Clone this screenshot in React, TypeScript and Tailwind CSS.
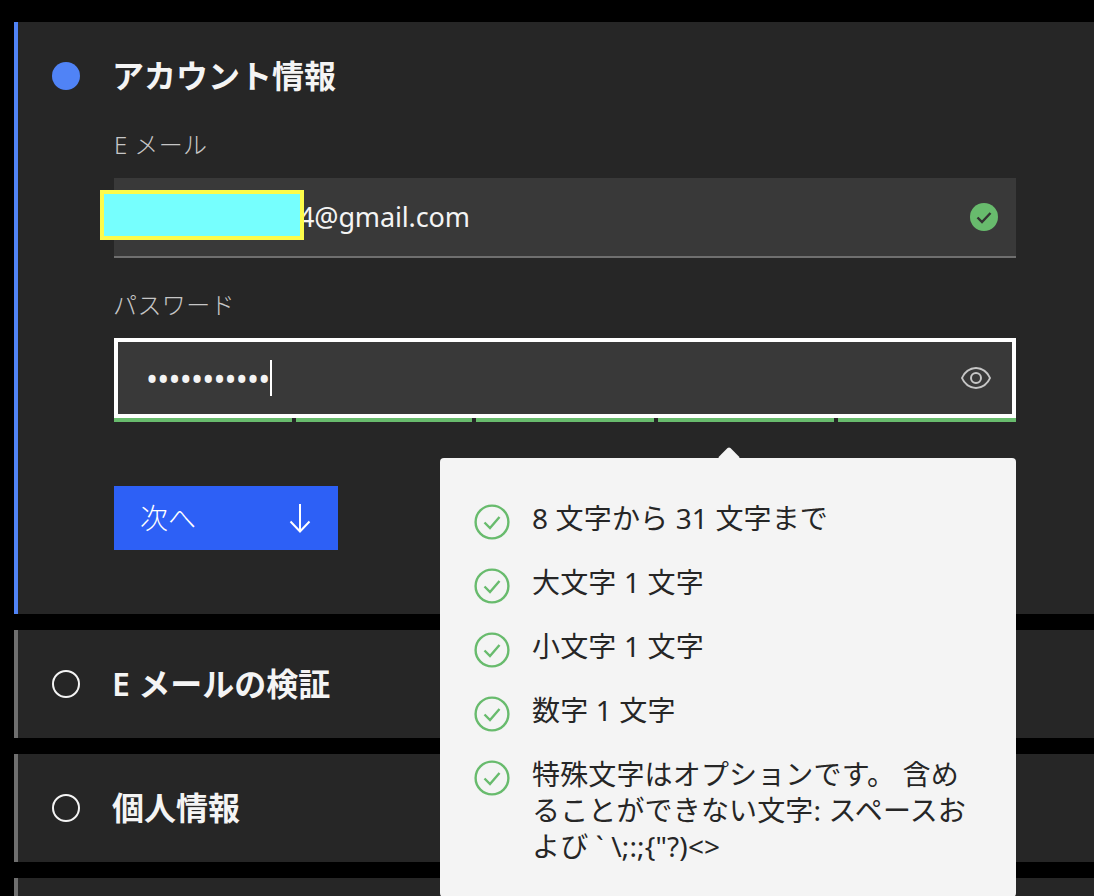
const rules = [
  "8 文字から 31 文字まで",
  "大文字 1 文字",
  "小文字 1 文字",
  "数字 1 文字",
  "特殊文字はオプションです。 含めることができない文字: スペースおよび ` \\;:;{\"?)<>",
];

function CheckOutline() {
  return (
    <svg width="36" height="36" viewBox="0 0 36 36" fill="none" className="shrink-0 mt-1 text-[#68bb6d]" stroke="currentColor" strokeWidth="2.4">
      <circle cx="18" cy="18" r="16.4" />
      <path d="M10.5 18.5 L16 24 L25.5 13" />
    </svg>
  );
}

function Step({ title }: { title: string }) {
  return (
    <section className="mt-4 h-[108px] bg-[#262626] border-l-4 border-[#6f6f6f] flex items-center pl-[34px]">
      <span className="w-7 h-7 rounded-full border-2 border-[#f4f4f4] shrink-0" />
      <h2 className="ml-[32px] text-[32px] leading-10 font-semibold text-[#f4f4f4]">{title}</h2>
    </section>
  );
}

export default function App() {
  return (
    <div className="h-[896px] overflow-hidden bg-black pt-[22px] pl-[14px] font-[family-name:'Noto_Sans','Noto_Sans_CJK_JP',sans-serif]">
      <section className="relative bg-[#262626] border-l-4 border-[#5083f6] pl-24 pr-[78px] pb-16">
        <div className="relative h-[107px] flex items-center pt-[1px]">
          <span className="absolute left-[-62px] w-7 h-7 rounded-full bg-[#5083f6]" />
          <h2 className="-ml-[2px] text-[32px] leading-10 font-semibold text-[#f4f4f4]">アカウント情報</h2>
        </div>

        <label className="block text-[24px] leading-8 tracking-[0.4px] font-light text-[#c6c6c6]">E メール</label>
        <div className="relative mt-[17px] h-20 bg-[#393939] border-b-2 border-[#6f6f6f] flex items-center pl-[185px] pr-[18px]">
          <span className="text-[27px] tracking-[-0.15px] text-[#f4f4f4]">4@gmail.com</span>
          <span className="absolute left-[-14px] top-3 w-[204px] h-[50px] bg-[#76fffe] border-4 border-[#fdfc4a]" />
          <svg width="28" height="28" viewBox="0 0 28 28" className="ml-auto">
            <circle cx="14" cy="14" r="14" fill="#68bb6d" />
            <path d="M7.5 14.5 L12 19 L20.5 10" fill="none" stroke="#333333" strokeWidth="2.4" />
          </svg>
        </div>

        <label className="block mt-[31px] -ml-[1px] text-[24px] leading-8 tracking-[0.4px] font-light text-[#c6c6c6]">パスワード</label>
        <div className="relative mt-[17px]">
          <div className="h-20 bg-[#393939] border-4 border-white flex items-center pl-[28px] pr-[20px]">
            <span className="text-[32px] leading-none tracking-[-0.8px] text-[#f4f4f4] translate-y-[1px]">•••••••••••</span>
            <span className="w-[2px] h-9 bg-white" />
            <svg width="32" height="32" viewBox="0 0 32 32" fill="#c6c6c6" className="ml-auto">
              <path d="M30.94,15.66A16.69,16.69,0,0,0,16,5,16.69,16.69,0,0,0,1.06,15.66a1,1,0,0,0,0,.68A16.69,16.69,0,0,0,16,27,16.69,16.69,0,0,0,30.94,16.34,1,1,0,0,0,30.94,15.66ZM16,25c-5.3,0-10.9-3.93-12.93-9C5.1,10.93,10.7,7,16,7s10.9,3.93,12.93,9C26.9,21.07,21.3,25,16,25Z" />
              <path d="M16,10a6,6,0,1,0,6,6A6,6,0,0,0,16,10Zm0,10a4,4,0,1,1,4-4A4,4,0,0,1,16,20Z" />
            </svg>
          </div>
          <div className="flex justify-between h-1">
            <span className="w-[178px] bg-[#68bb6d]" />
            <span className="w-[176px] bg-[#68bb6d]" />
            <span className="w-[178px] bg-[#68bb6d]" />
            <span className="w-[176px] bg-[#68bb6d]" />
            <span className="w-[178px] bg-[#68bb6d]" />
          </div>

          <div className="absolute z-10 top-[120px] right-0 w-[576px] bg-[#f4f4f4] rounded-[4px] pt-[42px] pb-[33px] pl-[34px] pr-[48px]">
            <span className="absolute top-[-8px] left-[281px] w-4 h-4 rotate-45 rounded-[2px] bg-[#f4f4f4]" />
            <ul className="relative flex flex-col gap-6">
              {rules.map((r) => (
                <li key={r} className="flex gap-[22px]">
                  <CheckOutline />
                  <span className="text-[28px] leading-9 tracking-[0.15px] text-[#262626]">{r}</span>
                </li>
              ))}
            </ul>
          </div>
        </div>

        <button className="mt-16 w-[224px] h-16 bg-[#2d60f6] text-white flex items-center justify-between pl-[26px] pr-[26px]">
          <span className="text-[28px] font-light leading-9">次へ</span>
          <svg width="24" height="32" viewBox="0 0 24 32" fill="none" stroke="white" strokeWidth="2">
            <path d="M12 2 V29 M2.5 19.5 L12 29.5 L21.5 19.5" />
          </svg>
        </button>
      </section>

      <Step title="E メールの検証" />
      <Step title="個人情報" />
      <section className="mt-4 h-[108px] bg-[#262626] border-l-4 border-[#6f6f6f]" />
    </div>
  );
}
